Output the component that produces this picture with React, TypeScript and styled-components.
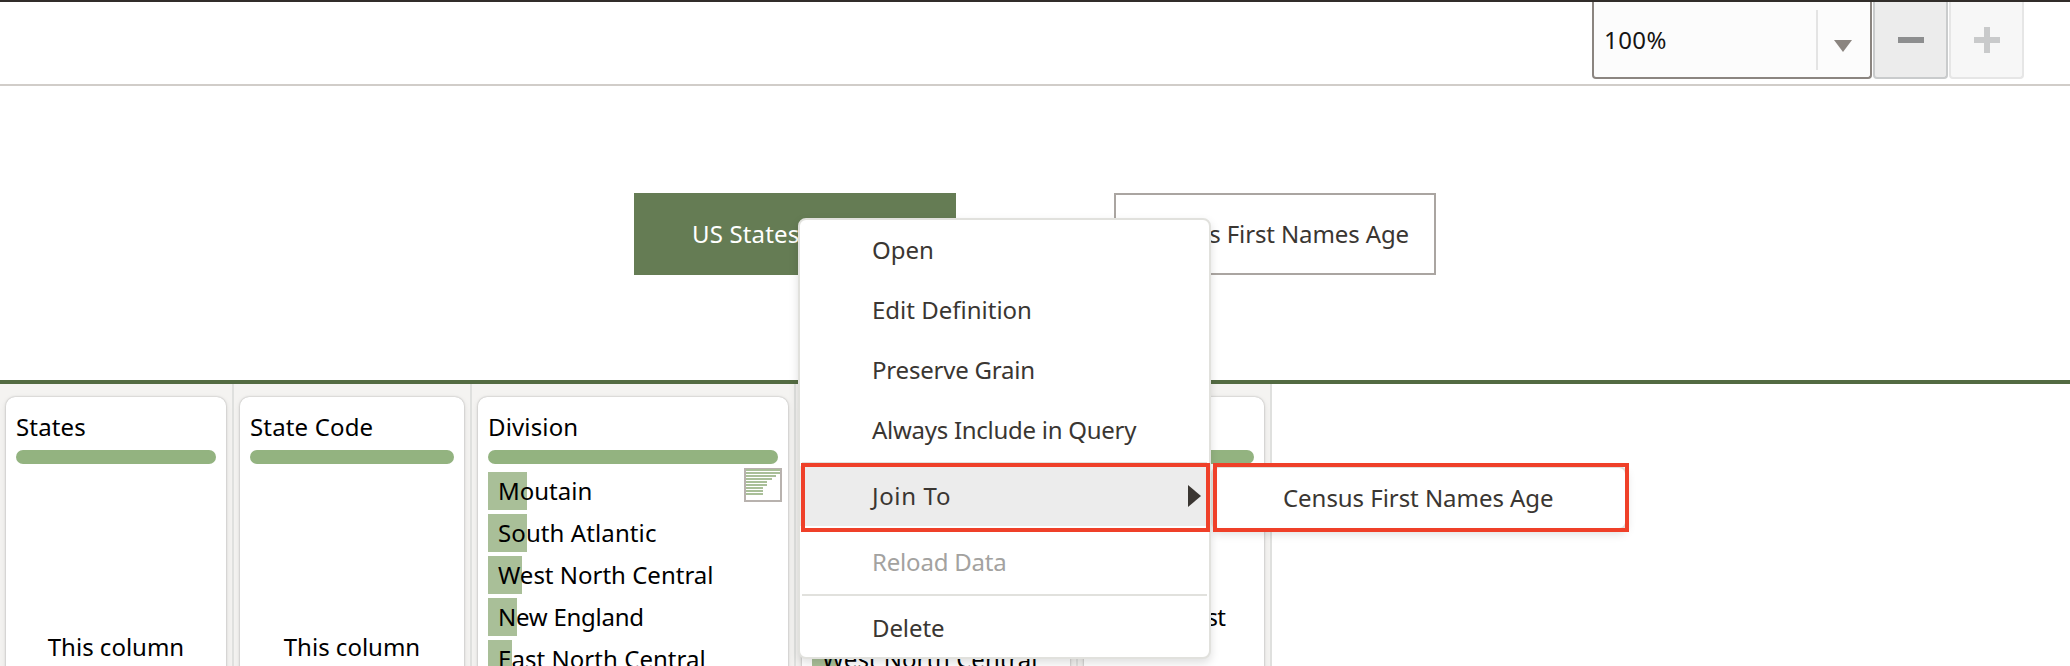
import React from "react";
import styled, { createGlobalStyle } from "styled-components";

const GlobalStyle = createGlobalStyle`
  * { box-sizing: border-box; }
  body {
    margin: 0;
    background: #fff;
    overflow: hidden;
    font: 24px/32px "Noto Sans", sans-serif;
    color: #000;
  }
`;

const Page = styled.div`
  position: relative;
  display: flex;
  flex-direction: column;
  width: 2070px;
  height: 666px;
  overflow: hidden;
  white-space: nowrap;
`;

const Toolbar = styled.header`
  display: flex;
  justify-content: flex-end;
  gap: 1px;
  height: 86px;
  padding-right: 46px;
  border-top: 2px solid #312d2a;
  border-bottom: 2px solid #d1cdc9;
`;

const ZoomSelect = styled.div`
  display: flex;
  align-items: center;
  width: 280px;
  height: 77px;
  background: #fcfcfc;
  border: 2px solid #8b8580;
  border-top: 0;
  border-radius: 0 0 4px 4px;
`;

const ZoomValue = styled.span`
  flex: 1;
  padding-left: 10px;
  color: #161513;
  letter-spacing: 0.4px;
`;

const ZoomArrow = styled.span`
  display: flex;
  align-items: center;
  width: 54px;
  height: 60px;
  padding: 13px 0 0 16px;
  border-left: 2px solid #e4e4e4;
`;

const ZoomButton = styled.button<{ $disabled?: boolean }>`
  display: flex;
  align-items: center;
  justify-content: center;
  width: 75px;
  height: 77px;
  padding: 1px 0 0;
  background: ${(p) => (p.$disabled ? "#f7f7f7" : "#ececec")};
  border: 2px solid ${(p) => (p.$disabled ? "#e6e6e6" : "#c9cbcc")};
  border-top: 0;
  border-radius: 0 0 4px 4px;
`;

const Canvas = styled.section`
  position: relative;
  height: 298px;
  border-bottom: 4px solid #536b42;
`;

const Node = styled.div<{ $x: number; $active?: boolean }>`
  position: absolute;
  left: ${(p) => p.$x}px;
  top: 107px;
  width: 322px;
  height: 82px;
  padding-top: 23px;
  background: ${(p) => (p.$active ? "#657c54" : "#fff")};
  border: 2px solid ${(p) => (p.$active ? "#657c54" : "#aaa5a1")};
  color: ${(p) => (p.$active ? "#fff" : "#3a3632")};
  padding-left: ${(p) => (p.$active ? 56 : 24)}px;
`;

const Columns = styled.section`
  display: flex;
  flex: 1;
  min-height: 0;
  overflow: hidden;
`;

const Column = styled.div<{ $width: number }>`
  display: flex;
  flex: none;
  width: ${(p) => p.$width}px;
  height: 400px;
  padding: 13px 6px 0;
  background: #f4f3f1;
  border-right: 2px solid #dfe0de;
`;

const Card = styled.div`
  position: relative;
  flex: 1;
  padding: 14px 10px 0;
  background: #fff;
  border-radius: 9px;
  box-shadow: 0 0 2px rgba(0, 0, 0, 0.3), 0 2px 6px rgba(0, 0, 0, 0.1);
`;

const CardTitle = styled.div`
  height: 32px;
  letter-spacing: 0.15px;
`;

const QualityBar = styled.div`
  height: 14px;
  margin: 7px 0 8px;
  background: #93b380;
  border-radius: 7px;
`;

const EmptyNote = styled.div`
  padding-top: 159px;
  text-align: center;
`;

const ValueRow = styled.div<{ $bar: number }>`
  height: 38px;
  margin-bottom: 4px;
  padding-left: 10px;
  line-height: 38px;
  background: linear-gradient(#a9bf98, #a9bf98) 0 0 / ${(p) => p.$bar}px 100% no-repeat;
`;

const MiniChart = styled.svg`
  position: absolute;
  right: 6px;
  top: 71px;
`;

const Menu = styled.nav`
  position: absolute;
  left: 798px;
  top: 218px;
  width: 413px;
  height: 441px;
  background: #fff;
  border: 2px solid #e1e1dd;
  border-radius: 8px;
  box-shadow: 0 4px 10px rgba(0, 0, 0, 0.13);
`;

const MenuItem = styled.div<{ $disabled?: boolean; $open?: boolean; $spacing?: number }>`
  display: flex;
  align-items: center;
  justify-content: space-between;
  height: 60px;
  padding: 0 8px 0 72px;
  color: ${(p) => (p.$disabled ? "#a3a2a0" : "#3a3632")};
  background: ${(p) => (p.$open ? "#ececec" : "transparent")};
  letter-spacing: ${(p) => p.$spacing ?? 0}px;
`;

const Separator = styled.div`
  height: 2px;
  margin: 2px;
  background: #e1e1dd;
`;

const SubMenu = styled.nav`
  position: absolute;
  left: 1211px;
  top: 466px;
  width: 416px;
  height: 64px;
  padding: 14px 0 0 70px;
  background: #fff;
  border: 2px solid #e1e1dd;
  border-radius: 8px;
  box-shadow: 0 4px 10px rgba(0, 0, 0, 0.13);
  color: #3a3632;
`;

const Highlight = styled.div<{ $x: number; $width: number }>`
  position: absolute;
  left: ${(p) => p.$x}px;
  top: 463px;
  width: ${(p) => p.$width}px;
  height: 69px;
  border: 4px solid #ef4029;
`;

const Label = styled.span<{ $spacing?: number }>`
  letter-spacing: ${(p) => p.$spacing ?? 0}px;
`;

type Value = { name: string; bar: number; spacing?: number };
type ColumnData = { title: string; width: number; values?: Value[] };

const columns: ColumnData[] = [
  { title: "States", width: 234 },
  { title: "State Code", width: 238 },
  {
    title: "Division",
    width: 324,
    values: [
      { name: "Moutain", bar: 39 },
      { name: "South Atlantic", bar: 39, spacing: 0.1 },
      { name: "West North Central", bar: 34 },
      { name: "New England", bar: 29, spacing: -0.25 },
      { name: "East North Central", bar: 24, spacing: 0.05 },
    ],
  },
  {
    title: "",
    width: 282,
    values: [
      { name: "", bar: 39 },
      { name: "", bar: 39 },
      { name: "", bar: 34 },
      { name: "", bar: 29 },
      { name: "West North Central", bar: 24 },
    ],
  },
  {
    title: "",
    width: 194,
    values: [
      { name: "", bar: 50 },
      { name: "", bar: 50 },
      { name: "", bar: 40 },
      { name: "South West", bar: 40, spacing: -0.65 },
    ],
  },
];

const chartLines = [34, 34, 30, 26, 21, 21, 17, 17, 17];

export default function App() {
  return (
    <>
      <GlobalStyle />
      <Page>
        <Toolbar>
          <ZoomSelect>
            <ZoomValue>100%</ZoomValue>
            <ZoomArrow>
              <svg width="18" height="12" viewBox="0 0 18 12">
                <path d="M0 0h18L9 12z" fill="#8b8580" />
              </svg>
            </ZoomArrow>
          </ZoomSelect>
          <ZoomButton>
            <svg width="26" height="26" viewBox="0 0 26 26">
              <path d="M0 10h26v6H0z" fill="#8d8e8f" />
            </svg>
          </ZoomButton>
          <ZoomButton $disabled>
            <svg width="26" height="26" viewBox="0 0 26 26">
              <path d="M0 10h10V0h6v10h10v6H16v10h-6V16H0z" fill="#c9cacb" />
            </svg>
          </ZoomButton>
        </Toolbar>

        <Canvas>
          <Node $x={634} $active>
            <Label $spacing={0.15}>US States</Label>
          </Node>
          <Node $x={1114}>
            <Label $spacing={-0.12}>Census First Names Age</Label>
          </Node>
        </Canvas>

        <Columns>
          {columns.map((column, i) => (
            <Column key={i} $width={column.width}>
              <Card>
                <CardTitle>{column.title}</CardTitle>
                <QualityBar />
                {column.values ? (
                  column.values.map((value, j) => (
                    <ValueRow key={j} $bar={value.bar}>
                      <Label $spacing={value.spacing}>{value.name}</Label>
                    </ValueRow>
                  ))
                ) : (
                  <EmptyNote>This column</EmptyNote>
                )}
                {column.title === "Division" && (
                  <MiniChart width="38" height="34" viewBox="0 0 38 34">
                    <rect x="1" y="1" width="36" height="32" fill="#fff" stroke="#b8b2ae" strokeWidth="2" />
                    {chartLines.map((w, k) => (
                      <rect key={k} x="2" y={1 + k * 3} width={w} height="2" fill="#a9bf98" />
                    ))}
                  </MiniChart>
                )}
              </Card>
            </Column>
          ))}
        </Columns>

        <SubMenu>
          <Label $spacing={-0.05}>Census First Names Age</Label>
        </SubMenu>
        <Menu>
          <MenuItem>Open</MenuItem>
          <MenuItem>Edit Definition</MenuItem>
          <MenuItem $spacing={-0.2}>Preserve Grain</MenuItem>
          <MenuItem $spacing={-0.27}>Always Include in Query</MenuItem>
          <Separator />
          <MenuItem $open $spacing={0.65}>
            Join To
            <svg width="13" height="22" viewBox="0 0 13 22">
              <path d="M0 0l13 11L0 22z" fill="#3a3632" />
            </svg>
          </MenuItem>
          <Separator />
          <MenuItem $disabled $spacing={-0.2}>Reload Data</MenuItem>
          <Separator />
          <MenuItem $spacing={-0.1}>Delete</MenuItem>
        </Menu>
        <Highlight $x={801} $width={409} />
        <Highlight $x={1213} $width={416} />
      </Page>
    </>
  );
}
